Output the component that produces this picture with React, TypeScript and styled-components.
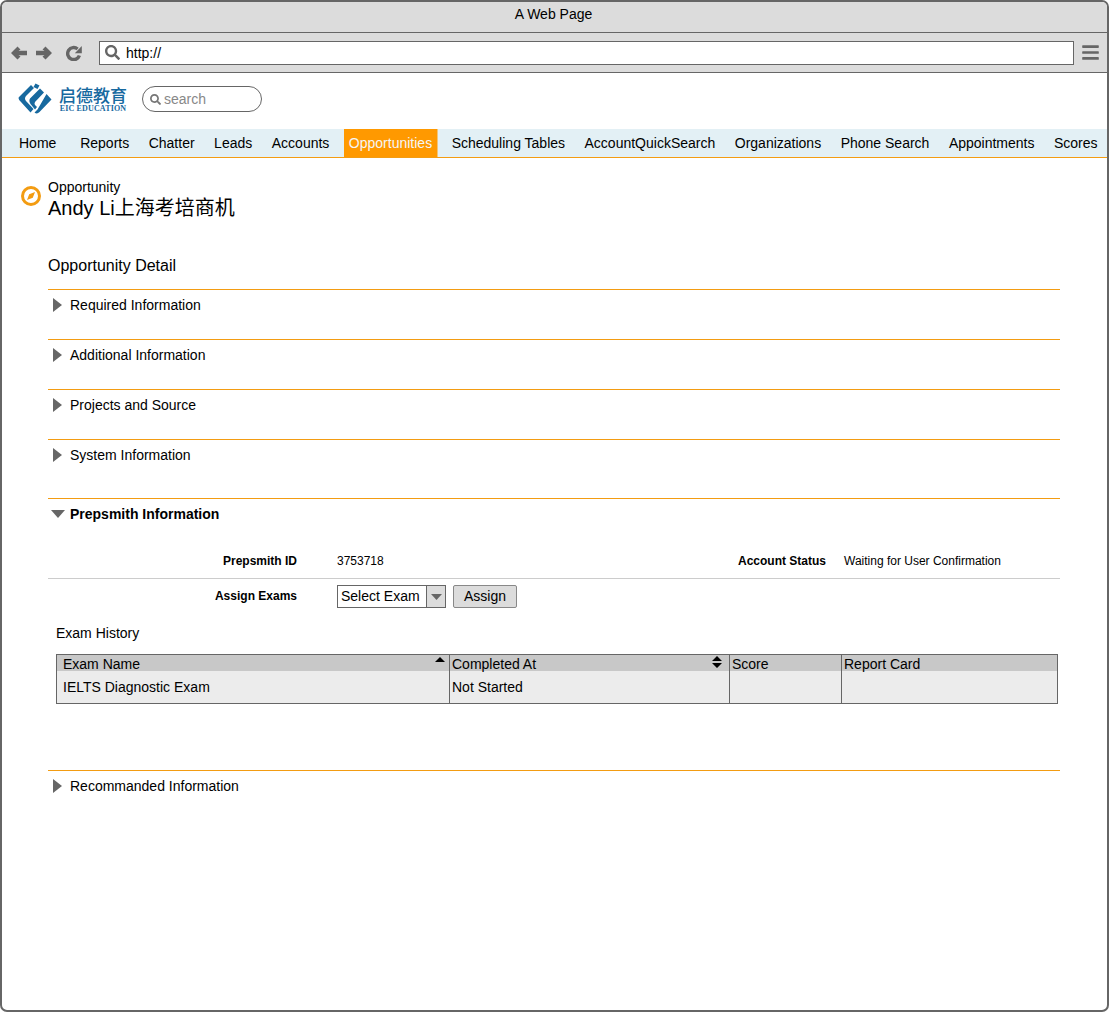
import { FaBars, FaSearch } from 'react-icons/fa'
import styled, { createGlobalStyle } from 'styled-components'

const GlobalStyle = createGlobalStyle`
  html, body {
    margin: 0;
    padding: 0;
    background: #fff;
  }
  * {
    box-sizing: border-box;
  }
`

const Frame = styled.div`
  display: flex;
  flex-direction: column;
  width: 1109px;
  height: 1012px;
  overflow: hidden;
  color: #000;
  font-family: 'Liberation Sans', Arial, 'Noto Sans CJK SC', sans-serif;
  font-size: 14px;
  background: #fff;
  border: 2px solid #666;
  border-radius: 7px;
`
const TitleBar = styled.div`
  display: flex;
  flex: none;
  align-items: center;
  justify-content: center;
  height: 31px;
  padding: 0 2px 6px 0;
  background: #dcdcdc;
  border-bottom: 1px solid #666;
`
const Toolbar = styled.div`
  display: flex;
  flex: none;
  align-items: center;
  height: 40px;
  padding: 0 7px 0 9px;
  color: #666;
  background: #dcdcdc;
  border-bottom: 1px solid #666;
`
const NavIcons = styled.div`
  display: flex;
  gap: 9px;
  align-items: center;
  width: 88px;
`
const ToolIcon = styled.svg<{ $flip?: boolean }>`
  display: block;
  flex: none;
  fill: #666;
  transform: ${(p) => (p.$flip ? 'scaleX(-1)' : 'none')};
`
const RefreshIcon = styled(ToolIcon)`
  margin-left: 5px;
`
const Address = styled.div`
  display: flex;
  flex: 1;
  gap: 6px;
  align-items: center;
  height: 24px;
  padding-left: 5px;
  color: #000;
  background: #fff;
  border: 1px solid #666;
`
const AddressIcon = styled(FaSearch)`
  color: #666;
`
const MenuIcon = styled(FaBars)`
  margin-left: 7px;
`
const Header = styled.div`
  display: flex;
  flex: none;
  gap: 15px;
  align-items: center;
  height: 56px;
  padding: 0 0 4px 16px;
`
const Logo = styled.div`
  display: flex;
  gap: 7px;
  align-items: center;
  width: 109px;
  color: #17699f;
`
const LogoText = styled.div`
  display: flex;
  flex-direction: column;
  align-items: center;
`
const LogoName = styled.div`
  font-family: 'Noto Sans CJK SC', sans-serif;
  font-size: 17px;
  font-weight: 500;
  line-height: 18px;
  white-space: nowrap;
`
const LogoSub = styled.div`
  margin-top: 1px;
  font-family: 'Liberation Serif', serif;
  font-size: 8px;
  font-weight: 700;
  line-height: 8px;
  letter-spacing: 0.15px;
  white-space: nowrap;
`
const SearchBox = styled.div`
  display: flex;
  gap: 3px;
  align-items: center;
  width: 120px;
  height: 26px;
  padding-left: 7px;
  color: #888;
  border: 1px solid #666;
  border-radius: 13px;
`
const SearchIcon = styled(FaSearch)`
  color: #777;
`
const Nav = styled.nav`
  display: flex;
  flex: none;
  gap: 9.5px;
  align-items: stretch;
  height: 29px;
  padding: 0 0 0 12px;
  background: #e3f0f5;
  border-bottom: 1px solid #f39c12;
`
const NavItem = styled.div<{ $active?: boolean; $wide?: boolean }>`
  display: flex;
  align-items: center;
  padding: 0 5px;
  margin-right: ${(p) => (p.$wide ? '4.3px' : '0')};
  color: ${(p) => (p.$active ? '#f5f5f5' : '#000')};
  white-space: nowrap;
  background: ${(p) => (p.$active ? '#ff9900' : 'transparent')};
  box-shadow: ${(p) => (p.$active ? '0.5px 0 0 #ff9900' : 'none')};
`
const Content = styled.main`
  flex: 1;
  padding: 21px 47px 0 46px;
`
const PageHead = styled.div`
  position: relative;
  display: flex;
  flex-direction: column;
`
const PageIcon = styled.svg`
  position: absolute;
  top: 7px;
  left: -27px;
  width: 20px;
  height: 20px;
`
const PageType = styled.div`
  line-height: 16px;
`
const PageTitle = styled.div`
  margin-top: 1px;
  font-size: 20px;
  line-height: 24px;
`
const DetailTitle = styled.div`
  margin: 36px 0 13px;
  font-size: 16px;
  line-height: 20px;
`
const Section = styled.section<{ $gap?: number }>`
  min-height: 50px;
  margin-top: ${(p) => p.$gap ?? 0}px;
  border-top: 1px solid #f39c12;
`
const SectionHead = styled.div<{ $open?: boolean }>`
  display: flex;
  gap: ${(p) => (p.$open ? '5px' : '8px')};
  align-items: center;
  height: 31px;
  padding-bottom: 2px;
  padding-left: ${(p) => (p.$open ? '3px' : '5px')};
  font-weight: ${(p) => (p.$open ? 700 : 400)};
`
const Arrow = styled.svg`
  display: block;
  flex: none;
  fill: #666;
`
const FieldRow = styled.div`
  display: grid;
  grid-template-columns: 249px 340px 189px 1fr;
  align-items: center;
  height: 35px;
  margin-top: 14px;
  font-size: 12px;
  border-bottom: 1px solid #ccc;
`
const FieldLabel = styled.div`
  font-weight: 700;
  text-align: right;
`
const FieldValue = styled.div<{ $inset: number }>`
  padding-left: ${(p) => p.$inset}px;
`
const AssignRow = styled.div`
  display: flex;
  align-items: center;
  height: 23px;
  margin-top: 6px;
`
const AssignLabel = styled(FieldLabel)`
  width: 249px;
  padding-bottom: 2px;
  margin-right: 40px;
  font-size: 12px;
`
const Select = styled.div`
  display: flex;
  align-items: stretch;
  width: 109px;
  height: 23px;
  margin-right: 7px;
  border: 1px solid #666;
`
const SelectText = styled.div`
  flex: 1;
  padding-left: 3px;
  line-height: 21px;
`
const SelectArrow = styled.div`
  display: flex;
  align-items: center;
  justify-content: center;
  width: 19px;
  background: #dcdcdc;
  border-left: 1px solid #666;
`
const Button = styled.div`
  width: 64px;
  height: 23px;
  line-height: 21px;
  text-align: center;
  background: #dcdcdc;
  border: 1px solid #888;
  border-radius: 2px;
`
const HistoryTitle = styled.div`
  margin: 17px 0 13px 8px;
  line-height: 16px;
`
const Table = styled.table`
  width: 1002px;
  margin-left: 8px;
  table-layout: fixed;
  border-spacing: 0;
  border-collapse: separate;
  background: #ececec;
  border: 1px solid #666;
`
const HeadCell = styled.th<{ $first?: boolean }>`
  position: relative;
  height: 16px;
  padding: 2px 0 0 ${(p) => (p.$first ? '6px' : '2px')};
  font-weight: 400;
  line-height: 14px;
  text-align: left;
  background: #c8c8c8;
  border-left: ${(p) => (p.$first ? 'none' : '1px solid #666')};
`
const BodyCell = styled.td<{ $first?: boolean }>`
  height: 32px;
  padding: 0 0 0 ${(p) => (p.$first ? '6px' : '2px')};
  border-left: ${(p) => (p.$first ? 'none' : '1px solid #666')};
`
const SortIcon = styled.svg<{ $right: number }>`
  position: absolute;
  top: 1px;
  right: ${(p) => p.$right}px;
  width: 10px;
  height: 12px;
  fill: #000;
`

const navItems = [
  'Home',
  'Reports',
  'Chatter',
  'Leads',
  'Accounts',
  'Opportunities',
  'Scheduling Tables',
  'AccountQuickSearch',
  'Organizations',
  'Phone Search',
  'Appointments',
  'Scores',
]
const closedSections = [
  'Required Information',
  'Additional Information',
  'Projects and Source',
  'System Information',
]

const ClosedArrow = () => (
  <Arrow width="9" height="14" viewBox="0 0 9 14">
    <path d="M0 0 L9 7 L0 14 Z" />
  </Arrow>
)

const BackArrow = ({ flip }: { flip?: boolean }) => (
  <ToolIcon $flip={flip} width="16" height="14" viewBox="0 0 16 14">
    <path d="M0 7 L6.5 0.5 L9.5 3.5 L7.5 4.7 H16 V9.3 H7.5 L9.5 10.5 L6.5 13.5 Z" />
  </ToolIcon>
)

const ReloadIcon = () => (
  <RefreshIcon as="svg" width="16" height="16" viewBox="0 0 16 16">
    <path d="M13.4 10.4 A6 6 0 1 1 11.6 4" fill="none" stroke="#666" strokeWidth="3.4" />
    <path d="M15.8 1 V8.2 H8.8 Z" />
  </RefreshIcon>
)

const LogoMark = () => (
  <svg width="34" height="32" viewBox="0 0 34 32" fill="#17699f">
    <path d="M1 14 L13 2 L16 5 L8 13 Q6 15.5 8 18 L15.5 26 L12.5 29.5 L3 19 Q-0.5 16 1 14 Z" />
    <path d="M17.5 0.5 L21.5 2.5 L19.5 6 L15.5 4 Z" />
    <path d="M12 15.5 L22 5.5 L26 9.5 L17 19 Q16 21 17 22 L19 24 L17 26.5 L12.5 21 Q10.5 18 12 15.5 Z" />
    <path d="M28.5 11 L33.5 16.5 L21.5 29 Q19 31.5 16.5 29.5 L19.5 26.5 Z" />
  </svg>
)

const App = () => {
  return (
    <Frame>
      <GlobalStyle />
      <TitleBar>A Web Page</TitleBar>
      <Toolbar>
        <NavIcons>
          <BackArrow />
          <BackArrow flip />
          <ReloadIcon />
        </NavIcons>
        <Address>
          <AddressIcon size={15} />
          http://
        </Address>
        <MenuIcon size={19} />
      </Toolbar>
      <Header>
        <Logo>
          <LogoMark />
          <LogoText>
            <LogoName>启德教育</LogoName>
            <LogoSub>EIC EDUCATION</LogoSub>
          </LogoText>
        </Logo>
        <SearchBox>
          <SearchIcon size={11} />
          search
        </SearchBox>
      </Header>
      <Nav>
        {navItems.map((item) => (
          <NavItem key={item} $active={item === 'Opportunities'} $wide={item === 'Home'}>
            {item}
          </NavItem>
        ))}
      </Nav>
      <Content>
        <PageHead>
          <PageIcon viewBox="0 0 20 20">
            <circle cx="10" cy="10" r="8.5" fill="none" stroke="#f39c12" strokeWidth="3" />
            <path d="M14 6 L11.8 11.8 L6 14 L8.2 8.2 Z" fill="#f39c12" />
          </PageIcon>
          <PageType>Opportunity</PageType>
          <PageTitle>Andy Li上海考培商机</PageTitle>
        </PageHead>
        <DetailTitle>Opportunity Detail</DetailTitle>
        {closedSections.map((title) => (
          <Section key={title}>
            <SectionHead>
              <ClosedArrow />
              {title}
            </SectionHead>
          </Section>
        ))}
        <Section $gap={9}>
          <SectionHead $open>
            <Arrow width="14" height="8" viewBox="0 0 14 8">
              <path d="M0 0 L14 0 L7 8 Z" />
            </Arrow>
            Prepsmith Information
          </SectionHead>
          <FieldRow>
            <FieldLabel>Prepsmith ID</FieldLabel>
            <FieldValue $inset={40}>3753718</FieldValue>
            <FieldLabel>Account Status</FieldLabel>
            <FieldValue $inset={18}>Waiting for User Confirmation</FieldValue>
          </FieldRow>
          <AssignRow>
            <AssignLabel>Assign Exams</AssignLabel>
            <Select>
              <SelectText>Select Exam</SelectText>
              <SelectArrow>
                <Arrow width="11" height="6" viewBox="0 0 11 6">
                  <path d="M0 0 L11 0 L5.5 6 Z" />
                </Arrow>
              </SelectArrow>
            </Select>
            <Button>Assign</Button>
          </AssignRow>
          <HistoryTitle>Exam History</HistoryTitle>
          <Table>
            <colgroup>
              <col width="392" />
              <col width="280" />
              <col width="112" />
              <col />
            </colgroup>
            <thead>
              <tr>
                <HeadCell $first>
                  Exam Name
                  <SortIcon $right={4} viewBox="0 0 10 12">
                    <path d="M0 6 L5 1 L10 6 Z" />
                  </SortIcon>
                </HeadCell>
                <HeadCell>
                  Completed At
                  <SortIcon $right={7} viewBox="0 0 10 12">
                    <path d="M0 5 L5 0 L10 5 Z M0 7 L10 7 L5 12 Z" />
                  </SortIcon>
                </HeadCell>
                <HeadCell>Score</HeadCell>
                <HeadCell>Report Card</HeadCell>
              </tr>
            </thead>
            <tbody>
              <tr>
                <BodyCell $first>IELTS Diagnostic Exam</BodyCell>
                <BodyCell>Not Started</BodyCell>
                <BodyCell />
                <BodyCell />
              </tr>
            </tbody>
          </Table>
        </Section>
        <Section $gap={66}>
          <SectionHead>
            <ClosedArrow />
            Recommanded Information
          </SectionHead>
        </Section>
      </Content>
    </Frame>
  )
}

export default App
